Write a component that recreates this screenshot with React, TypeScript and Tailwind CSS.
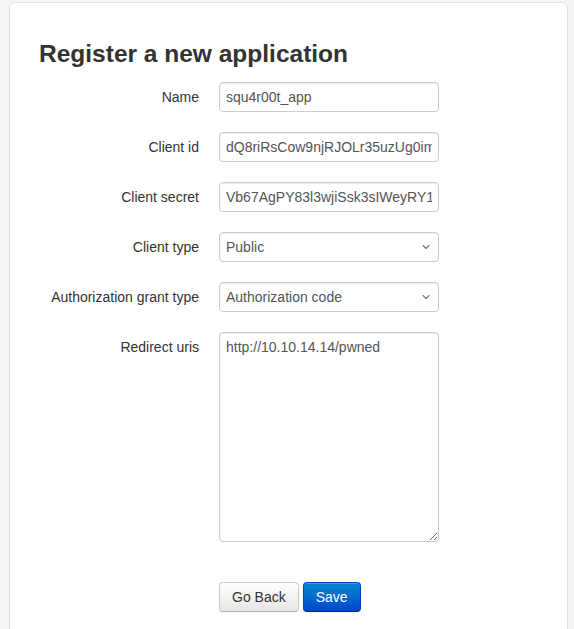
import { ChevronDown } from "lucide-react";

const font = { fontFamily: '"Liberation Sans", Arial, sans-serif' };

const inputCls =
  "h-[30px] w-[220px] rounded-[4px] border border-[#cccccc] bg-white px-[6px] text-[14px] text-[#555555] shadow-[inset_0_1px_1px_rgba(0,0,0,0.075)] outline-none";

function Row({ label, children }: { label: string; children: React.ReactNode }) {
  return (
    <div className="mb-[20px] flex items-start">
      <label className="w-[160px] pt-[5px] text-right text-[14px] leading-[20px] text-[#333333]">
        {label}
      </label>
      <div className="ml-[20px]">{children}</div>
    </div>
  );
}

function TextInput({ value }: { value: string }) {
  return <input readOnly defaultValue={value} className={inputCls} style={font} />;
}

function FakeSelect({ value }: { value: string }) {
  return (
    <div className={`${inputCls} flex items-center justify-between pr-[6px]`}>
      <span>{value}</span>
      <ChevronDown size={12} strokeWidth={2.2} className="text-[#777777]" />
    </div>
  );
}

export default function App() {
  return (
    <div className="h-[629px] overflow-hidden bg-[#f5f5f5] pl-[9px] pr-[6px] pt-[2px]" style={font}>
      <div className="h-[660px] rounded-[6px] border border-[#e3e3e3] bg-white pl-[29px] pt-[31px] shadow-[0_1px_2px_rgba(0,0,0,0.05)]">
        <h3 className="mb-[8px] text-[24.5px] font-bold leading-[40px] text-[#333333]">
          Register a new application
        </h3>
        <form>
          <Row label="Name">
            <TextInput value="squ4r00t_app" />
          </Row>
          <Row label="Client id">
            <TextInput value="dQ8riRsCow9njRJOLr35uzUg0imNbq5nFyhuJzVX" />
          </Row>
          <Row label="Client secret">
            <TextInput value="Vb67AgPY83l3wjiSsk3sIWeyRY1mKo2JtHPe7Uxd" />
          </Row>
          <Row label="Client type">
            <FakeSelect value="Public" />
          </Row>
          <Row label="Authorization grant type">
            <FakeSelect value="Authorization code" />
          </Row>
          <Row label="Redirect uris">
            <textarea
              readOnly
              defaultValue="http://10.10.14.14/pwned"
              className="block h-[210px] w-[220px] rounded-[4px] border border-[#cccccc] bg-white px-[6px] py-[4px] text-[14px] leading-[20px] text-[#555555] shadow-[inset_0_1px_1px_rgba(0,0,0,0.075)] outline-none"
              style={font}
            />
          </Row>
          <div className="ml-[180px] flex gap-[4px] pt-[20px]">
            <button
              type="button"
              className="h-[30px] rounded-[4px] border border-[#cccccc] border-b-[#b3b3b3] bg-gradient-to-b from-white to-[#e6e6e6] px-[12px] text-[14px] text-[#333333] shadow-[inset_0_1px_0_rgba(255,255,255,0.2),0_1px_2px_rgba(0,0,0,0.05)]"
            >
              Go Back
            </button>
            <button
              type="button"
              className="h-[30px] rounded-[4px] border border-[#0044cc] border-b-[#002a80] bg-gradient-to-b from-[#0088cc] to-[#0044cc] px-[12px] text-[14px] text-white shadow-[inset_0_1px_0_rgba(255,255,255,0.2),0_1px_2px_rgba(0,0,0,0.05)]"
            >
              Save
            </button>
          </div>
        </form>
      </div>
    </div>
  );
}
